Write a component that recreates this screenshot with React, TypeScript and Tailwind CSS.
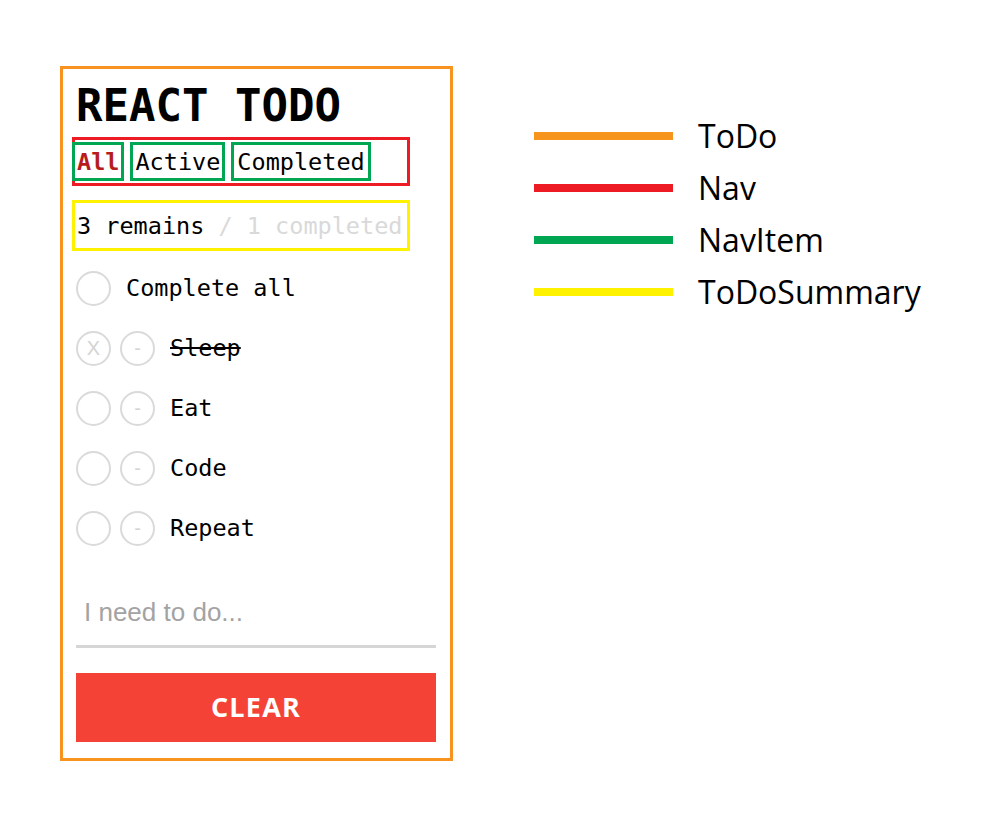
import { useState } from 'react';

type Todo = { id: number; title: string; done: boolean };

const mono = "font-['DejaVu_Sans_Mono','Liberation_Mono',monospace]";

const initialTodos: Todo[] = [
  { id: 1, title: 'Sleep', done: true },
  { id: 2, title: 'Eat', done: false },
  { id: 3, title: 'Code', done: false },
  { id: 4, title: 'Repeat', done: false },
];

function Circle({ children }: { children?: React.ReactNode }) {
  return (
    <div className="w-[35px] h-[35px] shrink-0 rounded-full border-2 border-[#dadada] flex items-center justify-center text-[#d4d4d4] text-[20px] leading-none font-['Liberation_Sans',Arial,sans-serif]">
      {children}
    </div>
  );
}

function NavItem({ label, active, wide }: { label: string; active?: boolean; wide?: boolean }) {
  return (
    <div
      className={`h-[39px] border-[3px] border-[#00a651] pt-[3px] flex items-center text-[23.5px] leading-none ${
        wide ? 'px-[3px]' : 'px-[2px]'
      } ${active ? 'text-[#b71c1c] font-bold' : 'text-black'}`}
    >
      {label}
    </div>
  );
}

function Nav() {
  return (
    <div className="-ml-[4px] mt-[9px] w-[338px] h-[49px] border-[3px] border-[#ed1c24] py-[2px]">
      <div className="-ml-[3px] flex gap-[6px]">
        <NavItem label="All" active />
        <NavItem label="Active" />
        <NavItem label="Completed" wide />
      </div>
    </div>
  );
}

function ToDoSummary({ todos }: { todos: Todo[] }) {
  const remains = todos.filter((t) => !t.done).length;
  const completed = todos.length - remains;

  return (
    <div className="-ml-[4px] mt-[14px] w-[338px] h-[51px] border-[3px] border-[#fff200] pl-[2px] pt-[3px] flex items-center text-[23.5px] leading-none whitespace-pre">
      <span className="text-black">{remains} remains</span>
      <span className="text-[#d9d9d9]"> / {completed} completed</span>
    </div>
  );
}

function ToDo() {
  const [todos] = useState<Todo[]>(initialTodos);

  return (
    <div className={`w-[393px] h-[695px] shrink-0 border-[3px] border-[#f7931e] pl-[13px] pr-[14px] pt-[15px] flex flex-col ${mono}`}>
      <h1 className="text-[44px] leading-[44px] font-bold text-black">REACT TODO</h1>

      <Nav />
      <ToDoSummary todos={todos} />

      <div className="mt-[7px] flex flex-col">
        <div className="h-[60px] flex items-center">
          <Circle />
          <span className="ml-[15px] pt-[1px] text-[23.5px] leading-none">Complete all</span>
        </div>

        {todos.map((todo) => (
          <div key={todo.id} className="h-[60px] flex items-center">
            <Circle>{todo.done ? 'X' : ''}</Circle>
            <div className="ml-[9px]">
              <Circle>-</Circle>
            </div>
            <span className={`ml-[15px] pt-[1px] text-[23.5px] leading-none text-black ${todo.done ? 'line-through' : ''}`}>
              {todo.title}
            </span>
          </div>
        ))}
      </div>

      <input
        placeholder="I need to do..."
        className="mt-[27px] w-full h-[63px] border-b-[3px] border-[#d6d6d6] pl-[8px] pb-[6px] text-[26px] font-['Liberation_Sans',Arial,sans-serif] placeholder:text-[#a3a3a3] outline-none"
      />

      <button className="mt-[25px] w-full h-[69px] bg-[#f44336] text-white text-[27px] font-bold tracking-[1.2px] font-['Open_Sans',sans-serif]">
        CLEAR
      </button>
    </div>
  );
}

const legend = [
  { label: 'ToDo', color: 'bg-[#f7941d]' },
  { label: 'Nav', color: 'bg-[#ed1c24]' },
  { label: 'NavItem', color: 'bg-[#00a651]' },
  { label: 'ToDoSummary', color: 'bg-[#fff200]' },
];

export default function App() {
  return (
    <div className="min-h-screen bg-white flex items-start pl-[60px] pt-[66px]">
      <ToDo />

      {/* component colour key */}
      <div className="ml-[81px] mt-[44px] flex flex-col font-['Open_Sans',sans-serif]">
        {legend.map((item) => (
          <div key={item.label} className="h-[52px] flex items-center">
            <div className={`w-[139px] h-[8px] ${item.color}`} />
            <span className="ml-[25px] text-[32px] leading-none text-black">{item.label}</span>
          </div>
        ))}
      </div>
    </div>
  );
}
